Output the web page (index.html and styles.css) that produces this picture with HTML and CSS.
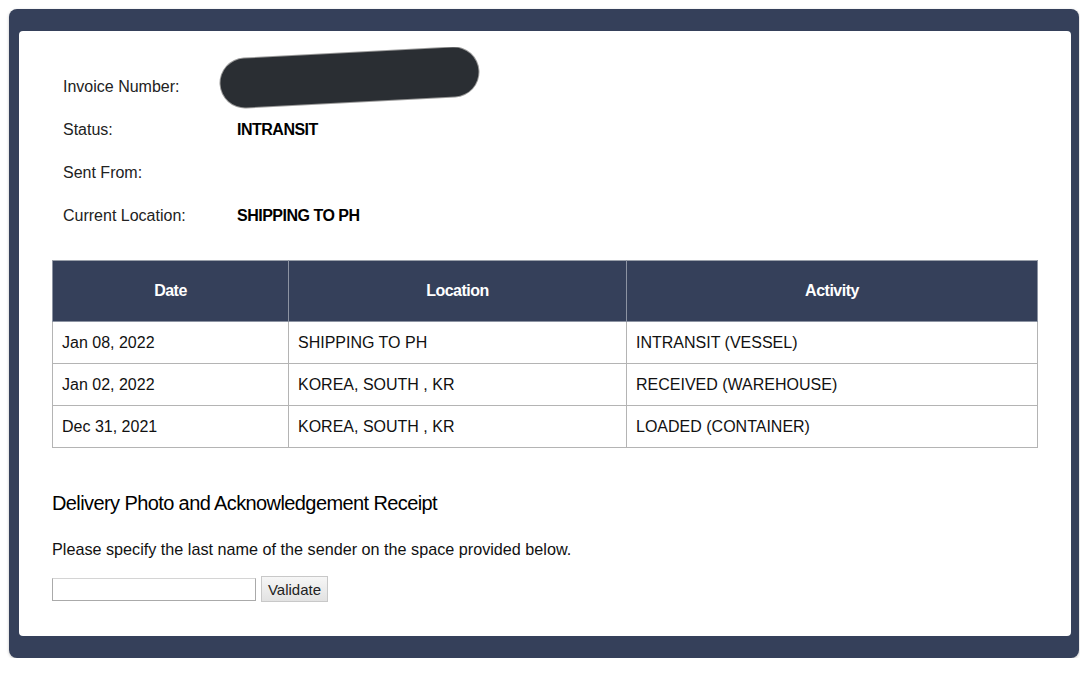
FILE: index.html
```html
<!DOCTYPE html>
<html>
<head>
<meta charset="utf-8">
<link rel="stylesheet" href="styles.css">
</head>
<body>
<div class="frame">
  <div class="panel">
    <div class="info">
      <div class="row"><span class="label">Invoice Number:</span><span class="value redacted-cell">
        <svg class="redact" width="270" height="64" viewBox="0 0 270 64"><line x1="27" y1="36" x2="236" y2="25" stroke="#9a9a9a" stroke-width="51" stroke-linecap="round"/><line x1="27" y1="36" x2="236" y2="25" stroke="#2a2e33" stroke-width="49" stroke-linecap="round"/></svg>
      </span></div>
      <div class="row"><span class="label">Status:</span><span class="value">INTRANSIT</span></div>
      <div class="row"><span class="label">Sent From:</span><span class="value"></span></div>
      <div class="row"><span class="label">Current Location:</span><span class="value">SHIPPING TO PH</span></div>
    </div>
    <table class="history">
      <thead>
        <tr><th class="c1">Date</th><th class="c2">Location</th><th class="c3">Activity</th></tr>
      </thead>
      <tbody>
        <tr><td>Jan 08, 2022</td><td>SHIPPING TO PH</td><td>INTRANSIT (VESSEL)</td></tr>
        <tr><td>Jan 02, 2022</td><td>KOREA, SOUTH , KR</td><td>RECEIVED (WAREHOUSE)</td></tr>
        <tr><td>Dec 31, 2021</td><td>KOREA, SOUTH , KR</td><td>LOADED (CONTAINER)</td></tr>
      </tbody>
    </table>
    <h2 class="title">Delivery Photo and Acknowledgement Receipt</h2>
    <p class="note">Please specify the last name of the sender on the space provided below.</p>
    <div class="form">
      <input class="field" type="text">
      <button class="btn" type="button">Validate</button>
    </div>
  </div>
</div>
</body>
</html>
```
FILE: styles.css
```css
html, body {
  margin: 0;
  padding: 0;
  background: #ffffff;
}
body {
  font-family: "Liberation Sans", Arial, sans-serif;
  font-size: 16px;
  color: #111;
}
.frame {
  margin: 9px 0 0 9px;
  width: 1070px;
  height: 649px;
  box-sizing: border-box;
  padding: 22px 8px 22px 10px;
  background: #35405a;
  border-radius: 8px;
  box-shadow: 0 1px 3px rgba(0,0,0,0.25);
}
.panel {
  background: #fff;
  height: 100%;
  box-sizing: border-box;
  border-radius: 4px;
  padding: 34px 33px 0 33px;
}
.info {
  padding-left: 11px;
}
.row {
  display: flex;
  height: 43px;
  align-items: center;
}
.label {
  width: 174px;
  flex: none;
  color: #222;
}
.value {
  font-weight: bold;
  letter-spacing: -0.5px;
  color: #000;
}
.redacted-cell {
  position: relative;
  height: 43px;
}
.redact {
  position: absolute;
  left: -19px;
  top: -18px;
}
.history {
  margin-top: 23px;
  width: 986px;
  border-collapse: collapse;
}
.history th {
  background: #35405a;
  color: #fff;
  height: 60px;
  padding: 0;
  font-weight: bold;
  letter-spacing: -0.5px;
  font-size: 16px;
  border: 1px solid #8c93a2;
  border-top-color: #9aa0aa;
}
.history th.c1 { width: 235px; }
.history th.c2 { width: 337px; }
.history td {
  height: 41px;
  padding: 0 0 0 9px;
  border: 1px solid #b4b4b4;
  text-align: left;
  color: #111;
}
.title {
  margin: 41px 0 0 0;
  font-size: 20px;
  font-weight: normal;
  letter-spacing: -0.6px;
  line-height: 28px;
  color: #000;
}
.note {
  margin: 21px 0 0 0;
  line-height: 22px;
  font-size: 16.2px;
  color: #111;
}
.form {
  display: flex;
  align-items: center;
  gap: 5px;
  margin-top: 16px;
}
.field {
  width: 204px;
  height: 23px;
  box-sizing: border-box;
  border: 1px solid #aaa;
  border-top-color: #d4d4d4;
  margin: 0;
  padding: 0;
}
.btn {
  height: 26px;
  width: 67px;
  box-sizing: border-box;
  font-family: inherit;
  font-size: 15px;
  color: #222;
  background: linear-gradient(#f6f6f6, #e2e2e2);
  border: 1px solid #c8c8c8;
  margin: 0;
  padding: 0;
}
```
